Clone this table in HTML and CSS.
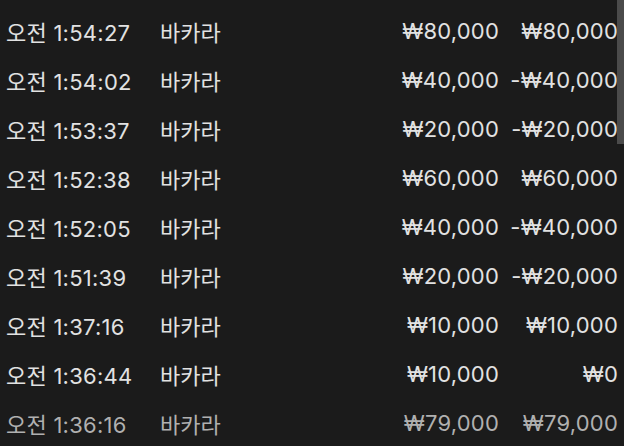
FILE: index.html
```html
<!DOCTYPE html>
<html lang="ko">
<head>
<meta charset="utf-8">
<link rel="stylesheet" href="styles.css">
</head>
<body>
<div class="list">
  <div class="row"><span class="time">오전 1:54:27</span><span class="game">바카라</span><span class="bet">₩80,000</span><span class="win">₩80,000</span></div>
  <div class="row"><span class="time">오전 1:54:02</span><span class="game">바카라</span><span class="bet">₩40,000</span><span class="win">-₩40,000</span></div>
  <div class="row"><span class="time">오전 1:53:37</span><span class="game">바카라</span><span class="bet">₩20,000</span><span class="win">-₩20,000</span></div>
  <div class="row"><span class="time">오전 1:52:38</span><span class="game">바카라</span><span class="bet">₩60,000</span><span class="win">₩60,000</span></div>
  <div class="row"><span class="time">오전 1:52:05</span><span class="game">바카라</span><span class="bet">₩40,000</span><span class="win">-₩40,000</span></div>
  <div class="row"><span class="time">오전 1:51:39</span><span class="game">바카라</span><span class="bet">₩20,000</span><span class="win">-₩20,000</span></div>
  <div class="row"><span class="time">오전 1:37:16</span><span class="game">바카라</span><span class="bet">₩10,000</span><span class="win">₩10,000</span></div>
  <div class="row"><span class="time">오전 1:36:44</span><span class="game">바카라</span><span class="bet">₩10,000</span><span class="win">₩0</span></div>
  <div class="row dim"><span class="time">오전 1:36:16</span><span class="game">바카라</span><span class="bet">₩79,000</span><span class="win">₩79,000</span></div>
</div>
<div class="scrollbar"></div>
</body>
</html>
```

FILE: styles.css
```css
html, body {
  margin: 0;
  padding: 0;
  background: #1b1b1b;
  height: 100%;
  overflow: hidden;
}
body {
  font-family: Inter, "Noto Sans CJK KR", sans-serif;
  font-size: 22px;
  color: #e2e2e2;
}
.list {
  padding: 6px 6px 0 6px;
}
.row {
  display: grid;
  grid-template-columns: 154px 1fr 120px 119px;
  height: 49px;
  align-items: center;
  white-space: nowrap;
}
.bet, .win {
  text-align: right;
  letter-spacing: 0.2px;
}
.time {
  letter-spacing: 0.25px;
}
.dim {
  color: #b0b0b0;
}
.scrollbar {
  position: absolute;
  top: 0;
  right: 0;
  width: 7px;
  height: 144px;
  background: #4b4b4b;
}
```
